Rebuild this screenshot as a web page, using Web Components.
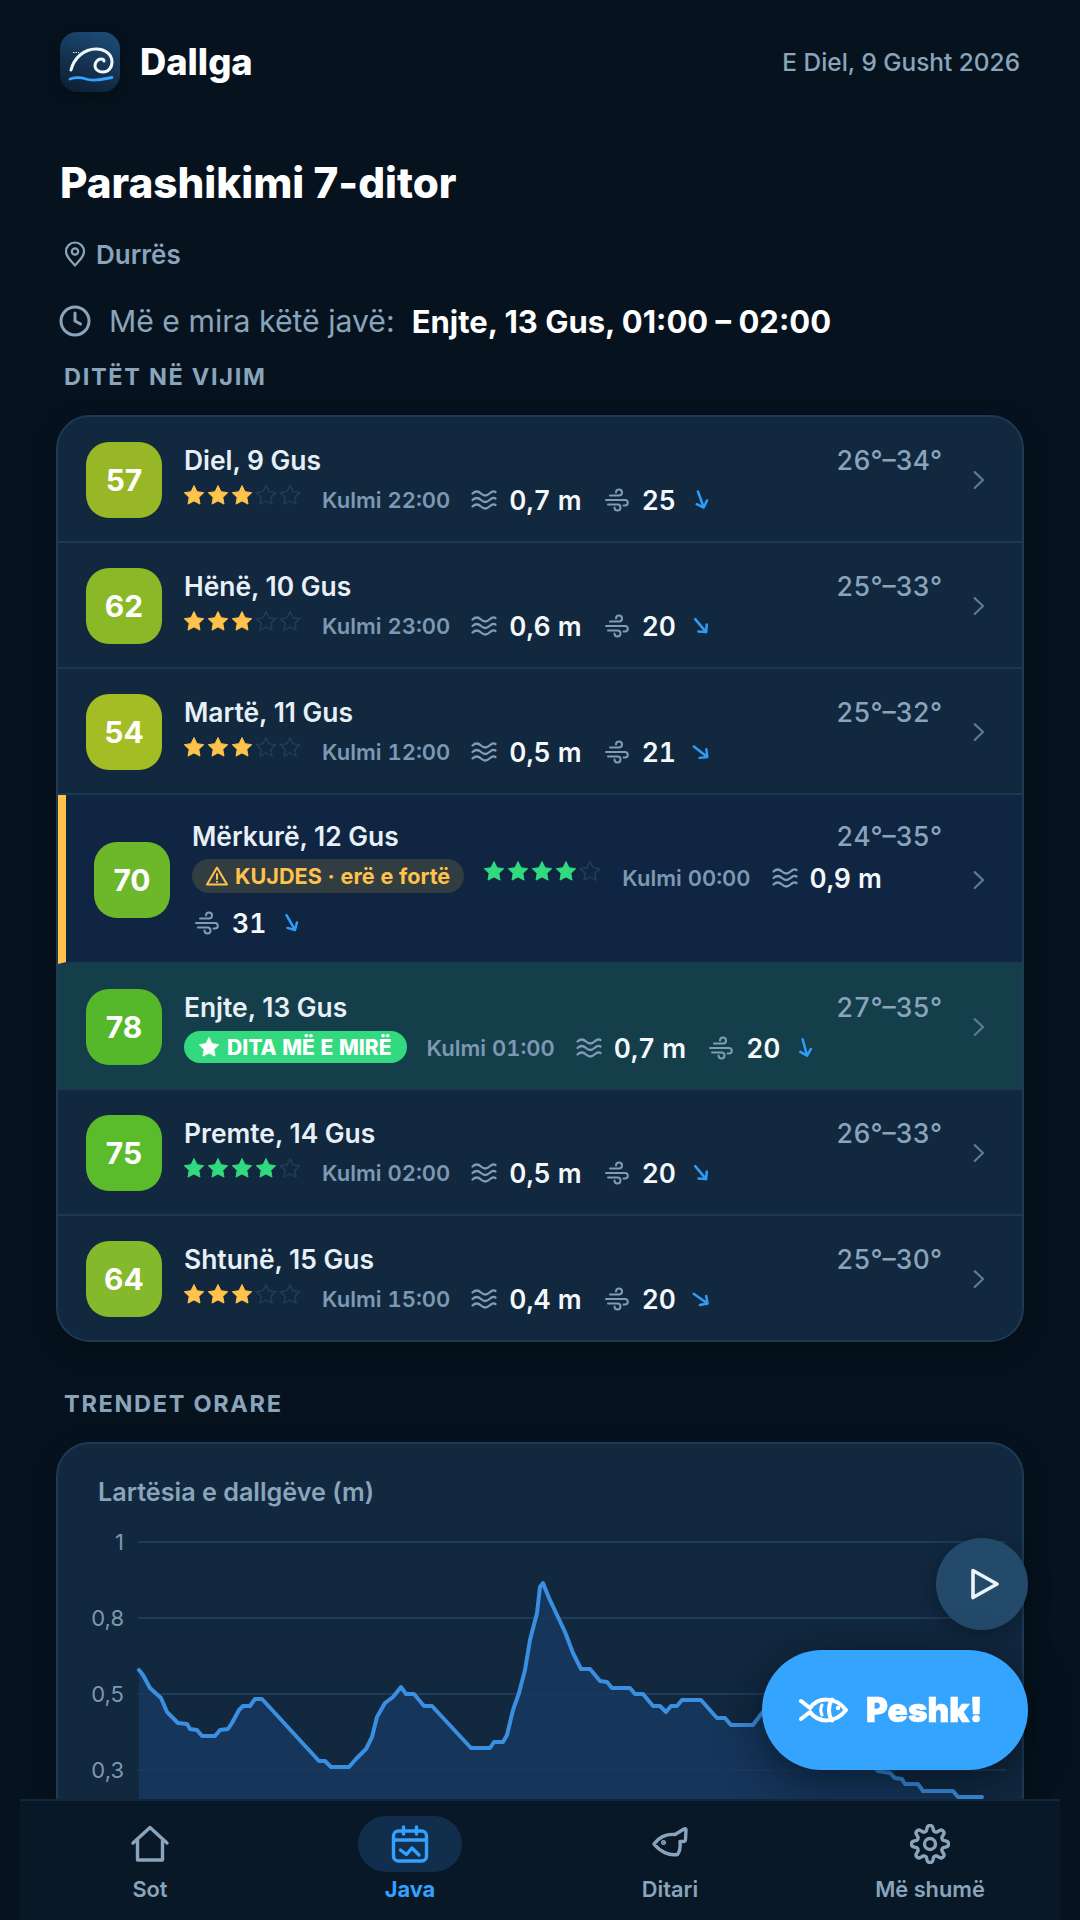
<!DOCTYPE html>
<html lang="sq">
<head>
<meta charset="utf-8">
<title>Dallga</title>
<style>
    html, body { margin: 0; height: 1920px; overflow: hidden; background: #06131f; }
    body { font-family: Inter, "Noto Sans", sans-serif; color: #e8f0f7; }
    main { display: block; padding: 32px 56px 0; }
</style>
</head>
<body>
<main>
    <app-header date="E Diel, 9 Gusht 2026">Dallga</app-header>
    <page-intro place="Durrës" best="Enjte, 13 Gus, 01:00 – 02:00">Parashikimi 7-ditor</page-intro>
    <section-label top="23">DITËT NË VIJIM</section-label>
    <day-list>
        <day-row score="57" tile="#97b726" temp="26°–34°" stars="3" peak="22:00" wave="0,7 m" wind="25" dir="160">Diel, 9 Gus</day-row>
        <day-row score="62" tile="#8ab827" temp="25°–33°" stars="3" peak="23:00" wave="0,6 m" wind="20" dir="140">Hënë, 10 Gus</day-row>
        <day-row score="54" tile="#a5bd25" temp="25°–32°" stars="3" peak="12:00" wave="0,5 m" wind="21" dir="128">Martë, 11 Gus</day-row>
        <day-row score="70" tile="#6db72a" temp="24°–35°" stars="4" good peak="00:00" wave="0,9 m" wind="31" dir="150" variant="warn">Mërkurë, 12 Gus<warn-pill slot="badge">KUJDES · erë e fortë</warn-pill></day-row>
        <day-row score="78" tile="#55b82a" temp="27°–35°" peak="01:00" wave="0,7 m" wind="20" dir="165" variant="best">Enjte, 13 Gus<best-pill slot="badge">DITA MË E MIRË</best-pill></day-row>
        <day-row score="75" tile="#5abb2b" temp="26°–33°" stars="4" good peak="02:00" wave="0,5 m" wind="20" dir="140">Premte, 14 Gus</day-row>
        <day-row score="64" tile="#83b92a" temp="25°–30°" stars="3" peak="15:00" wave="0,4 m" wind="20" dir="125" last>Shtunë, 15 Gus</day-row>
    </day-list>
    <section-label top="47">TRENDET ORARE</section-label>
    <wave-chart>Lartësia e dallgëve (m)</wave-chart>
</main>
<play-button></play-button>
<catch-button>Peshk!</catch-button>
<bottom-nav>
    <nav-item icon="home">Sot</nav-item>
    <nav-item icon="calendar" active>Java</nav-item>
    <nav-item icon="fish">Ditari</nav-item>
    <nav-item icon="gear">Më shumë</nav-item>
</bottom-nav>

<script>
;(() => {
    // small helper, every element gets an open shadow root
    const define = (name, render) => {
        customElements.define(name, class extends HTMLElement {
            connectedCallback() {
                if (this.shadowRoot) return;
                this.attachShadow({ mode: 'open' }).innerHTML = render(this);
            }
        });
    };

    const star = (fill, color) => `<svg width="24" height="24" viewBox="0 0 24 24" style="display:block">
        <path d="M12 2.6l3 6.1 6.7 1-4.9 4.7 1.2 6.7-6-3.2-6 3.2 1.2-6.7-4.9-4.7 6.7-1z"
            fill="${fill ? color : 'none'}" stroke="${fill ? color : '#223c55'}" stroke-width="${fill ? 1 : 1.6}" stroke-linejoin="round"/></svg>`;

    const waveIcon = `<svg width="28" height="28" viewBox="0 0 28 28" fill="none" stroke="#7f9db6" stroke-width="2.2" stroke-linecap="round">
        <path d="M2.500 7.500c3-2.800 5.500-2.800 8.500 0s5.500 2.800 8.500 0 4.500-2.600 6-1.500"/>
        <path d="M2.500 14c3-2.800 5.500-2.800 8.500 0s5.500 2.800 8.500 0 4.500-2.600 6-1.500"/>
        <path d="M2.500 20.500c3-2.800 5.500-2.800 8.500 0s5.500 2.800 8.500 0 4.500-2.600 6-1.500"/></svg>`;

    const windIcon = `<svg width="28" height="28" viewBox="0 0 28 28" fill="none" stroke="#7f9db6" stroke-width="2" stroke-linecap="round">
        <path d="M8 9.500h9a3 3 0 1 0-3-3"/>
        <path d="M4 14h19a2.800 2.800 0 0 1 0 5.600h-1.500"/>
        <path d="M6 18.500h9.500a3 3 0 1 1-3 3"/></svg>`;

    define('app-header', (el) => `<style>
        :host { display: flex; align-items: center; justify-content: space-between; padding: 0 4px; height: 60px; }
        .brand { display: flex; align-items: center; gap: 20px; font-size: 36.300px; font-weight: 800; color: #fff; }
        .date { font-size: 24.400px; font-weight: 500; color: #8aa4bb; }
        svg { display: block; border-radius: 17px; box-shadow: 0 4px 14px rgba(0,0,0,.35); }
    </style>
    <div class="brand">
        <svg width="60" height="60" viewBox="0 0 60 60">
            <defs><linearGradient id="g" x1="0.7" y1="0" x2="0.3" y2="1"><stop offset="0" stop-color="#1c4a74"/><stop offset="1" stop-color="#0d2035"/></linearGradient></defs>
            <rect width="60" height="60" fill="url(#g)"/>
            <path d="M11 38C14 26 24 17 36 17c10 0 16 6 16 13 0 6-4 10-9 10-5 0-8-3-8-6 0-4 3-7 6-7 2 0 3 1 3 2" fill="none" stroke="#f2f7fb" stroke-width="3" stroke-linecap="round"/>
            <path d="M13 20.500h6" fill="none" stroke="#dfe9f2" stroke-width="1" stroke-dasharray="1.500 1"/>
            <path d="M10 47c6-2 10-2 16 0s12 1 26-1.500" fill="none" stroke="#35a4ff" stroke-width="2.800" stroke-linecap="round"/>
        </svg>
        <slot></slot>
    </div>
    <div class="date">${el.getAttribute('date')}</div>`);

    define('page-intro', (el) => `<style>
        :host { display: block; padding: 0 4px; }
        h1 { margin: 66px 0 0; font-size: 42.200px; line-height: 50px; font-weight: 800; color: #fff; }
        .place { margin-top: 30px; height: 32px; display: flex; align-items: center; gap: 8px; font-size: 26px; font-weight: 600; color: #8aa4bb; }
        .best { margin-top: 33px; height: 36px; display: flex; align-items: center; font-size: 30.200px; color: #8aa4bb; white-space: nowrap; }
        .best svg { margin-right: 18px; margin-left: -1px; }
        b { font-weight: 700; color: #fff; margin-left: 17px; font-size: 31px; }
        svg { display: block; flex: none; }
    </style>
    <h1><slot></slot></h1>
    <div class="place">
        <svg width="26" height="26" viewBox="0 0 26 26" fill="none" stroke="#8aa4bb" stroke-width="2.200" stroke-linejoin="round" style="margin-left:2px">
            <path d="M13 24.500C8 19 4 15 4 10.500a9 9 0 0 1 18 0C22 15 18 19 13 24.500z"/><circle cx="13" cy="10.500" r="3.200"/></svg>
        ${el.getAttribute('place')}
    </div>
    <div class="best">
        <svg width="32" height="32" viewBox="0 0 32 32" fill="none" stroke="#8aa4bb" stroke-width="3" stroke-linecap="round" stroke-linejoin="round">
            <circle cx="16" cy="16" r="14"/><path d="M16 8v8l5.500 3"/></svg>
        <span>Më e mira këtë javë:</span><b>${el.getAttribute('best')}</b>
    </div>`);

    define('section-label', (el) => `<style>
        :host { display: block; margin-top: ${el.getAttribute('top')}px; padding-left: 8px;
            font-size: 23.500px; line-height: 30px; font-weight: 700; letter-spacing: 1.700px; color: #8aa4bb; }
    </style><slot></slot>`);

    define('day-list', () => `<style>
        :host { display: block; margin-top: 23px; border: 2px solid #1d3a56; border-radius: 34px; overflow: hidden; background: #11283f; box-shadow: 0 8px 26px rgba(0,0,0,.35); }
    </style><slot></slot>`);

    define('day-row', (el) => {
        const count = Number(el.getAttribute('stars') || 0);
        const color = el.hasAttribute('good') ? '#33d97f' : '#ffc24a';
        const stars = count ? `<div class="stars">${[0, 1, 2, 3, 4].map((i) => star(i < count, color)).join('')}</div>` : '';
        return `<style>
            :host { display: flex; align-items: center; padding: 25px 31px 23px 28px; gap: 22px; border-bottom: 2px solid #1b3851; }
            :host([last]) { border-bottom: 0; }
            :host([variant="warn"]) { background: #102541; border-left: 8px solid #ffc24a; }
            :host([variant="best"]) { background: #153e4b; }
            .tile { flex: none; width: 76px; height: 76px; border-radius: 23px; display: flex; align-items: center; justify-content: center;
                background: ${el.getAttribute('tile')}; color: #fff; font-size: 30px; font-weight: 700; }
            .body { flex: 1; min-width: 0; }
            .head { display: flex; justify-content: space-between; line-height: 32px; height: 32px; font-size: 26.400px; font-weight: 600; color: #e8f0f7; }
            .temp { font-size: 26.400px; font-weight: 500; color: #8aa4bb; font-variant-numeric: tabular-nums; }
            .meta { margin-top: 8px; display: flex; flex-wrap: wrap; align-items: center; gap: 14px 20px; min-height: 32px; font-variant-numeric: tabular-nums; }
            :host([variant="warn"]) .meta { row-gap: 12px; }
            :host([variant="warn"]) .stars { margin-top: -5px; }
            :host([variant="best"]) .meta { margin-top: 9px; margin-bottom: -1px; }
            .stars { display: flex; margin: -2px 0 9px -2px; }
            .peak { font-size: 22px; font-weight: 600; color: #7d99b2; line-height: 32px; }
            .stat { display: flex; align-items: center; gap: 11px; font-size: 26.500px; font-weight: 600; color: #f4f8fb; line-height: 32px; }
            .wind { gap: 12px; }
            .arrow { margin-left: 2px; }
            svg { display: block; flex: none; }
            .chev { flex: none; margin-left: 3px; }
        </style>
        <div class="tile">${el.getAttribute('score')}</div>
        <div class="body">
            <div class="head"><span><slot></slot></span><span class="temp">${el.getAttribute('temp')}</span></div>
            <div class="meta">
                <slot name="badge"></slot>
                ${stars}
                <span class="peak">Kulmi ${el.getAttribute('peak')}</span>
                <span class="stat">${waveIcon}${el.getAttribute('wave')}</span>
                <span class="stat wind">${windIcon}${el.getAttribute('wind')}
                    <svg class="arrow" width="22" height="22" viewBox="0 0 22 22" fill="none" stroke="#2f9df7" stroke-width="2.500" stroke-linecap="round" stroke-linejoin="round" style="transform:rotate(${el.getAttribute('dir')}deg)">
                        <path d="M11 20V3M5.500 8.500L11 3l5.500 5.500"/></svg>
                </span>
            </div>
        </div>
        <svg class="chev" width="24" height="24" viewBox="0 0 24 24" fill="none" stroke="#5f7c95" stroke-width="2.400" stroke-linecap="round" stroke-linejoin="round"><path d="M7 3l9.500 9L7 21" transform="translate(1.500 1.500) scale(.88)"/></svg>`;
    });

    define('warn-pill', () => `<style>
        :host { display: inline-flex; align-items: center; gap: 7px; height: 34px; padding: 0 14px; margin: -1px 0 2px; border-radius: 17px; background: #323d42;
            font-size: 21.600px; font-weight: 700; color: #ffc24a; white-space: nowrap; }
        svg { display: block; }
    </style>
    <svg width="22" height="22" viewBox="0 0 22 22" fill="none" stroke="#ffc24a" stroke-width="2" stroke-linejoin="round" stroke-linecap="round">
        <path d="M11 2.500L21 19.500H1z"/><path d="M11 9v5M11 16.800v.2"/></svg>
    <slot></slot>`);

    define('best-pill', () => `<style>
        :host { display: inline-flex; align-items: center; gap: 6px; height: 32px; padding: 0 15px 0 13px; margin-top: -2px; border-radius: 16px; background: #33d97f;
            font-size: 21px; font-weight: 800; color: #fff; white-space: nowrap; }
        svg { display: block; }
    </style>
    <svg width="24" height="24" viewBox="0 0 24 24"><path d="M12 2.600l3 6.100 6.700 1-4.900 4.700 1.200 6.700-6-3.200-6 3.200 1.200-6.700-4.900-4.700 6.700-1z" fill="#fff" stroke="#fff" stroke-linejoin="round"/></svg>
    <slot></slot>`);

    // chart points were read off the curve, screen coordinates
    const curve = [[139,1670],[143,1675],[150,1688],[161,1698],[167,1712],[178,1723],[187,1724],[190,1729],[197,1730],[202,1736],[215,1736],[220,1730],[228,1729],[232,1723],[239,1710],[243,1706],[250,1706],[255,1699],[262,1699],[319,1761],[325,1761],[331,1767],[349,1767],[356,1759],[366,1749],[372,1737],[377,1717],[385,1703],[393,1697],[401,1687],[406,1694],[414,1694],[424,1706],[432,1706],[471,1748],[490,1748],[494,1742],[503,1742],[507,1735],[513,1710],[519,1693],[525,1670],[530,1640],[537,1613],[540,1587],[543,1583],[549,1598],[565,1632],[573,1653],[581,1669],[590,1669],[600,1681],[607,1682],[612,1688],[630,1688],[635,1694],[643,1694],[653,1706],[660,1706],[666,1712],[671,1706],[677,1706],[682,1700],[701,1700],[717,1718],[725,1718],[731,1725],[753,1725],[762,1713],[775,1700],[800,1700],[878,1771],[890,1773],[895,1778],[902,1779],[905,1784],[918,1784],[923,1791],[953,1791],[958,1797],[982,1797]];

    define('wave-chart', () => {
        const ox = 58, oy = 1520;
        const line = curve.map(([x, y]) => `${x - ox},${y - oy}`).join(' L');
        const grid = [[1542, '1'], [1618, '0,8'], [1694, '0,5'], [1770, '0,3']];
        return `<style>
            :host { display: block; margin-top: 23px; height: 520px; border: 2px solid #1d3a56; border-radius: 34px; background: #11283f; box-shadow: 0 8px 26px rgba(0,0,0,.35); overflow: hidden; }
            .title { margin: 33px 0 13px 40px; font-size: 25.200px; line-height: 30px; font-weight: 600; color: #8aa4bb; }
            svg { display: block; }
            text { font-family: Inter, "Noto Sans", sans-serif; font-size: 22px; fill: #7f98ae; }
        </style>
        <div class="title"><slot></slot></div>
        <svg width="964" height="400" viewBox="0 0 964 400">
            ${grid.map(([y]) => `<line x1="80" x2="948" y1="${y - oy}" y2="${y - oy}" stroke="#1c3a54" stroke-width="2"/>`).join('')}
            <path d="M${line} L${curve[curve.length - 1][0] - ox},400 L${curve[0][0] - ox},400 Z" fill="#15355a"/>
            ${grid.map(([y]) => `<line x1="80" x2="948" y1="${y - oy}" y2="${y - oy}" stroke="#1f4060" stroke-width="1.500" opacity=".6"/>`).join('')}
            <path d="M${line}" fill="none" stroke="#3b8fe0" stroke-width="4" stroke-linejoin="round" stroke-linecap="round"/>
            ${grid.map(([y, t]) => `<text x="66" y="${y - oy + 8}" text-anchor="end">${t}</text>`).join('')}
        </svg>`;
    });

    define('play-button', () => `<style>
        :host { position: fixed; left: 936px; top: 1538px; width: 92px; height: 92px; border-radius: 50%; background: #244a6b; display: flex; align-items: center; justify-content: center; box-shadow: 0 6px 24px rgba(0,0,0,.3); }
        svg { display: block; margin-left: 6px; }
    </style>
    <svg width="32" height="34" viewBox="0 0 32 34" fill="none" stroke="#edf3f8" stroke-width="3.600" stroke-linejoin="round"><path d="M4 3.500L28 17 4 30.500z"/></svg>`);

    define('catch-button', () => `<style>
        :host { position: fixed; left: 762px; top: 1650px; width: 266px; height: 120px; box-sizing: border-box; border-radius: 60px; background: #35a4ff; display: flex; align-items: center; gap: 17px; padding-left: 37px; box-shadow: 0 10px 44px rgba(2,10,20,.6);
            font-size: 33.500px; font-weight: 900; color: #fff; -webkit-text-stroke: .6px #fff; }
        svg { display: block; flex: none; }
    </style>
    <svg width="50" height="28" viewBox="0 0 50 28" fill="none" stroke="#fff" stroke-width="4" stroke-linecap="round" stroke-linejoin="round">
        <path d="M2 23l9-7c8 11 25 12 36-2C36 0 19 1 11 12L2 5"/><path d="M33 3.500c-4 6-4 15 0 21"/><path d="M23 9c-1.500 3-1.500 7 0 10" stroke-width="3"/><circle cx="39" cy="12" r="1.500" fill="#fff" stroke-width="1.500"/></svg>
    <slot></slot>`);

    define('bottom-nav', () => `<style>
        :host { position: fixed; left: 20px; top: 1799px; width: 1040px; height: 121px; box-sizing: border-box; border-top: 2px solid #12263b; background: #081827; display: grid; grid-template-columns: repeat(4, 1fr); padding-top: 15px; }
    </style><slot></slot>`);

    // gear outline, eight soft lobes
    const gearPath = () => {
        const pts = [];
        for (let i = 0; i < 96; i++) {
            const a = i / 96 * Math.PI * 2;
            const r = 15.8 + 2.6 * Math.max(-1, Math.min(1, 1.5 * Math.cos(a * 8)));
            pts.push(`${(20 + r * Math.cos(a)).toFixed(2)},${(20 + r * Math.sin(a)).toFixed(2)}`);
        }
        return `M${pts.join(' L')}Z`;
    };

    const navIcons = {
        home: `<path d="M3 19L20 3.500 37 19M7.500 16v20h25V16"/>`,
        calendar: `<rect x="3.500" y="7" width="33" height="30" rx="5"/><path d="M3.500 16h33M13.500 3v7M26.500 3v7M10.500 26l6 4.500 5.500-6.500 7 7"/>`,
        fish: `<path d="M4 20C8 14 16 9.500 25 10.500L34 5Q36 4 36 6L35.500 15.500Q35.500 17.500 33 17.500L30 17.500C30.500 23 29.500 28 27.500 30.500C19 32 10 27.500 4 20Z"/><circle cx="13.500" cy="18.500" r=".8" fill="currentColor"/>`,
        gear: `<path d="${gearPath()}"/><circle cx="20" cy="20" r="5.500"/>`
    };

    define('nav-item', (el) => `<style>
        :host { display: flex; flex-direction: column; align-items: center; font-size: 21.800px; line-height: 26px; font-weight: 600; color: #8aa4bb; }
        :host([active]) { color: #33a1ff; font-weight: 700; }
        .pill { width: 104px; height: 56px; border-radius: 28px; display: flex; align-items: center; justify-content: center; margin-bottom: 4px; }
        :host([active]) .pill { background: #112f4d; }
        svg { display: block; }
    </style>
    <div class="pill"><svg width="40" height="40" viewBox="0 0 40 40" fill="none" stroke="currentColor" stroke-width="3.400" stroke-linecap="round" stroke-linejoin="round">${navIcons[el.getAttribute('icon')]}</svg></div>
    <slot></slot>`);
})();
</script>
</body>
</html>
